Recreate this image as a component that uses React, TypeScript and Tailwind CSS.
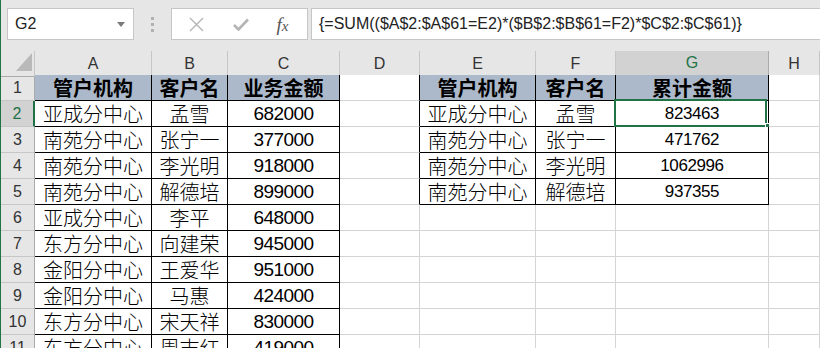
import React from "react";

/* ---------------------------------- Data ---------------------------------- */

const LEFT: string[][] = [
  ["管户机构", "客户名", "业务金额"],
  ["亚成分中心", "孟雪", "682000"],
  ["南苑分中心", "张宁一", "377000"],
  ["南苑分中心", "李光明", "918000"],
  ["南苑分中心", "解德培", "899000"],
  ["亚成分中心", "李平", "648000"],
  ["东方分中心", "向建荣", "945000"],
  ["金阳分中心", "王爱华", "951000"],
  ["金阳分中心", "马惠", "424000"],
  ["东方分中心", "宋天祥", "830000"],
  ["东方分中心", "周志红", "419000"],
];

const RIGHT: string[][] = [
  ["管户机构", "客户名", "累计金额"],
  ["亚成分中心", "孟雪", "823463"],
  ["南苑分中心", "张宁一", "471762"],
  ["南苑分中心", "李光明", "1062996"],
  ["南苑分中心", "解德培", "937355"],
];

const COLS = ["A", "B", "C", "D", "E", "F", "G", "H"];
const ROWS = [1, 2, 3, 4, 5, 6, 7, 8, 9, 10, 11];

const inTable = (r: number, c: number) =>
  (c >= 1 && c <= 3 && r >= 1 && r <= 11) || (c >= 5 && c <= 7 && r >= 1 && r <= 5);

const cellText = (r: number, c: number): string => {
  if (c >= 1 && c <= 3) return LEFT[r - 1]?.[c - 1] ?? "";
  if (c >= 5 && c <= 7 && r <= 5) return RIGHT[r - 1]?.[c - 5] ?? "";
  return "";
};

const GRID = "grid grid-cols-[34px_117px_76px_112px_80px_116px_80px_153px_1fr]";

/* -------------------------------- Toolbar --------------------------------- */

function FormulaBar() {
  return (
    <div className="h-[51px] bg-[#e6e6e6] flex items-start pt-[8px] pl-[6px] shrink-0">
      {/* name box */}
      <div className="w-[127px] h-[32px] bg-white border border-[#c6c6c6] flex items-center pl-[7px] pr-[8px]">
        <span className="flex-1 text-[16px] text-[#222] font-['Liberation_Sans',sans-serif]">G2</span>
        <svg width="8" height="5" viewBox="0 0 8 5">
          <path d="M0 0h8L4 5z" fill="#7a7a7a" />
        </svg>
      </div>

      {/* grip dots */}
      <div className="w-[37px] h-[32px] flex flex-col items-center justify-center gap-[3px]">
        <span className="w-[3px] h-[3px] bg-[#b1b1b1]" />
        <span className="w-[3px] h-[3px] bg-[#b1b1b1]" />
        <span className="w-[3px] h-[3px] bg-[#b1b1b1]" />
      </div>

      {/* cancel / enter / fx */}
      <div className="w-[137px] h-[32px] bg-white border border-[#c6c6c6] flex items-center">
        <div className="w-[46px] flex justify-center pl-[2px]">
          <svg width="15" height="15" viewBox="0 0 15 15">
            <path d="M1 1l13 13M14 1L1 14" stroke="#b4b4b4" strokeWidth="1.4" />
          </svg>
        </div>
        <div className="w-[46px] flex justify-center">
          <svg width="16" height="13" viewBox="0 0 16 13">
            <path d="M1 7l4.5 4.5L15 1.5" stroke="#b4b4b4" strokeWidth="2.6" fill="none" />
          </svg>
        </div>
        <div className="flex-1 flex justify-center pr-[6px]">
          <span className="italic text-[19px] leading-none text-[#555] font-['Liberation_Serif',serif]">
            f<span className="text-[15px]">x</span>
          </span>
        </div>
      </div>

      {/* formula */}
      <div className="flex-1 ml-[3px] h-[32px] bg-white border border-r-0 border-[#c6c6c6] flex items-center pl-[7px]">
        <span className="text-[16px] text-[#222] font-['Liberation_Sans',sans-serif]">
          {"{=SUM(($A$2:$A$61=E2)*($B$2:$B$61=F2)*$C$2:$C$61)}"}
        </span>
      </div>
    </div>
  );
}

/* --------------------------------- Sheet ---------------------------------- */

function ColumnHeaders() {
  return (
    <div className={`${GRID} h-[24px] shrink-0`}>
      <div className="bg-[#e6e6e6] border-r border-b border-r-[#c6c6c6] border-b-[#ababab] relative">
        <svg className="absolute left-[15px] top-[2px]" width="16" height="18" viewBox="0 0 16 18">
          <path d="M16 0V18H0z" fill="#b9b9b9" />
        </svg>
      </div>
      {COLS.map((col) =>
        col === "G" ? (
          <div
            key={col}
            className="bg-[#d2d2d2] border-r border-b-2 border-r-[#ababab] border-b-[#217346] flex items-center justify-center text-[16px] text-[#217346] font-['Liberation_Sans',sans-serif]"
          >
            {col}
          </div>
        ) : (
          <div
            key={col}
            className="bg-[#e6e6e6] border-r border-b border-r-[#c6c6c6] border-b-[#ababab] flex items-center justify-center text-[16px] text-[#333] font-['Liberation_Sans',sans-serif]"
          >
            {col}
          </div>
        )
      )}
    </div>
  );
}

function Cell({ r, c }: { r: number; c: number }) {
  const text = cellText(r, c);
  const blackRight = inTable(r, c) || inTable(r, c + 1);
  const blackBottom = inTable(r, c) || inTable(r + 1, c);
  const isHeader = r === 1 && inTable(r, c);
  const isNumber = /^\d+$/.test(text);
  const isG = c === 7;

  const border = `border-r border-b ${blackRight ? "border-r-black" : "border-r-[#d4d4d4]"} ${
    blackBottom ? "border-b-black" : "border-b-[#d4d4d4]"
  }`;

  const font = isHeader
    ? "text-[20px] font-bold text-black font-['Noto_Sans_CJK_SC',sans-serif]"
    : isNumber
    ? isG
      ? "text-[17px] tracking-[-0.4px] text-black font-['Liberation_Sans',sans-serif]"
      : "text-[19px] tracking-[-0.6px] text-black font-['Liberation_Sans',sans-serif]"
    : "text-[20px] font-light text-black font-['Noto_Sans_CJK_SC',sans-serif]";

  return (
    <div
      className={`relative flex items-center justify-center leading-none ${border} ${
        isHeader ? "bg-[#acb9ca]" : "bg-white"
      }`}
    >
      <span className={`${font} whitespace-nowrap`}>{text}</span>

      {/* active cell selection */}
      {r === 2 && c === 7 && (
        <>
          <div className="absolute left-[-2px] top-[-2px] w-[153px] h-[28px] border-2 border-[#217346]" />
          <div className="absolute left-[149px] top-[22px] w-[6px] h-[6px] bg-[#217346] border border-white" />
        </>
      )}
    </div>
  );
}

function Row({ r }: { r: number }) {
  const selected = r === 2;
  return (
    <div className={`${GRID} h-[26px] shrink-0`}>
      {selected ? (
        <div className="bg-[#d2d2d2] border-r-2 border-b border-r-[#217346] border-b-[#c6c6c6] flex items-center justify-center text-[16px] text-[#217346] font-['Liberation_Sans',sans-serif]">
          {r}
        </div>
      ) : (
        <div className="bg-[#e6e6e6] border-r border-b border-r-[#ababab] border-b-[#c6c6c6] flex items-center justify-center text-[16px] text-[#333] font-['Liberation_Sans',sans-serif]">
          {r}
        </div>
      )}
      {[1, 2, 3, 4, 5, 6, 7, 8].map((c) => (
        <Cell key={c} r={r} c={c} />
      ))}
    </div>
  );
}

export default function App() {
  return (
    <div className="w-[820px] h-[348px] overflow-hidden bg-white border-l border-[#217346] flex flex-col">
      <FormulaBar />
      <ColumnHeaders />
      {ROWS.map((r) => (
        <Row key={r} r={r} />
      ))}
    </div>
  );
}
